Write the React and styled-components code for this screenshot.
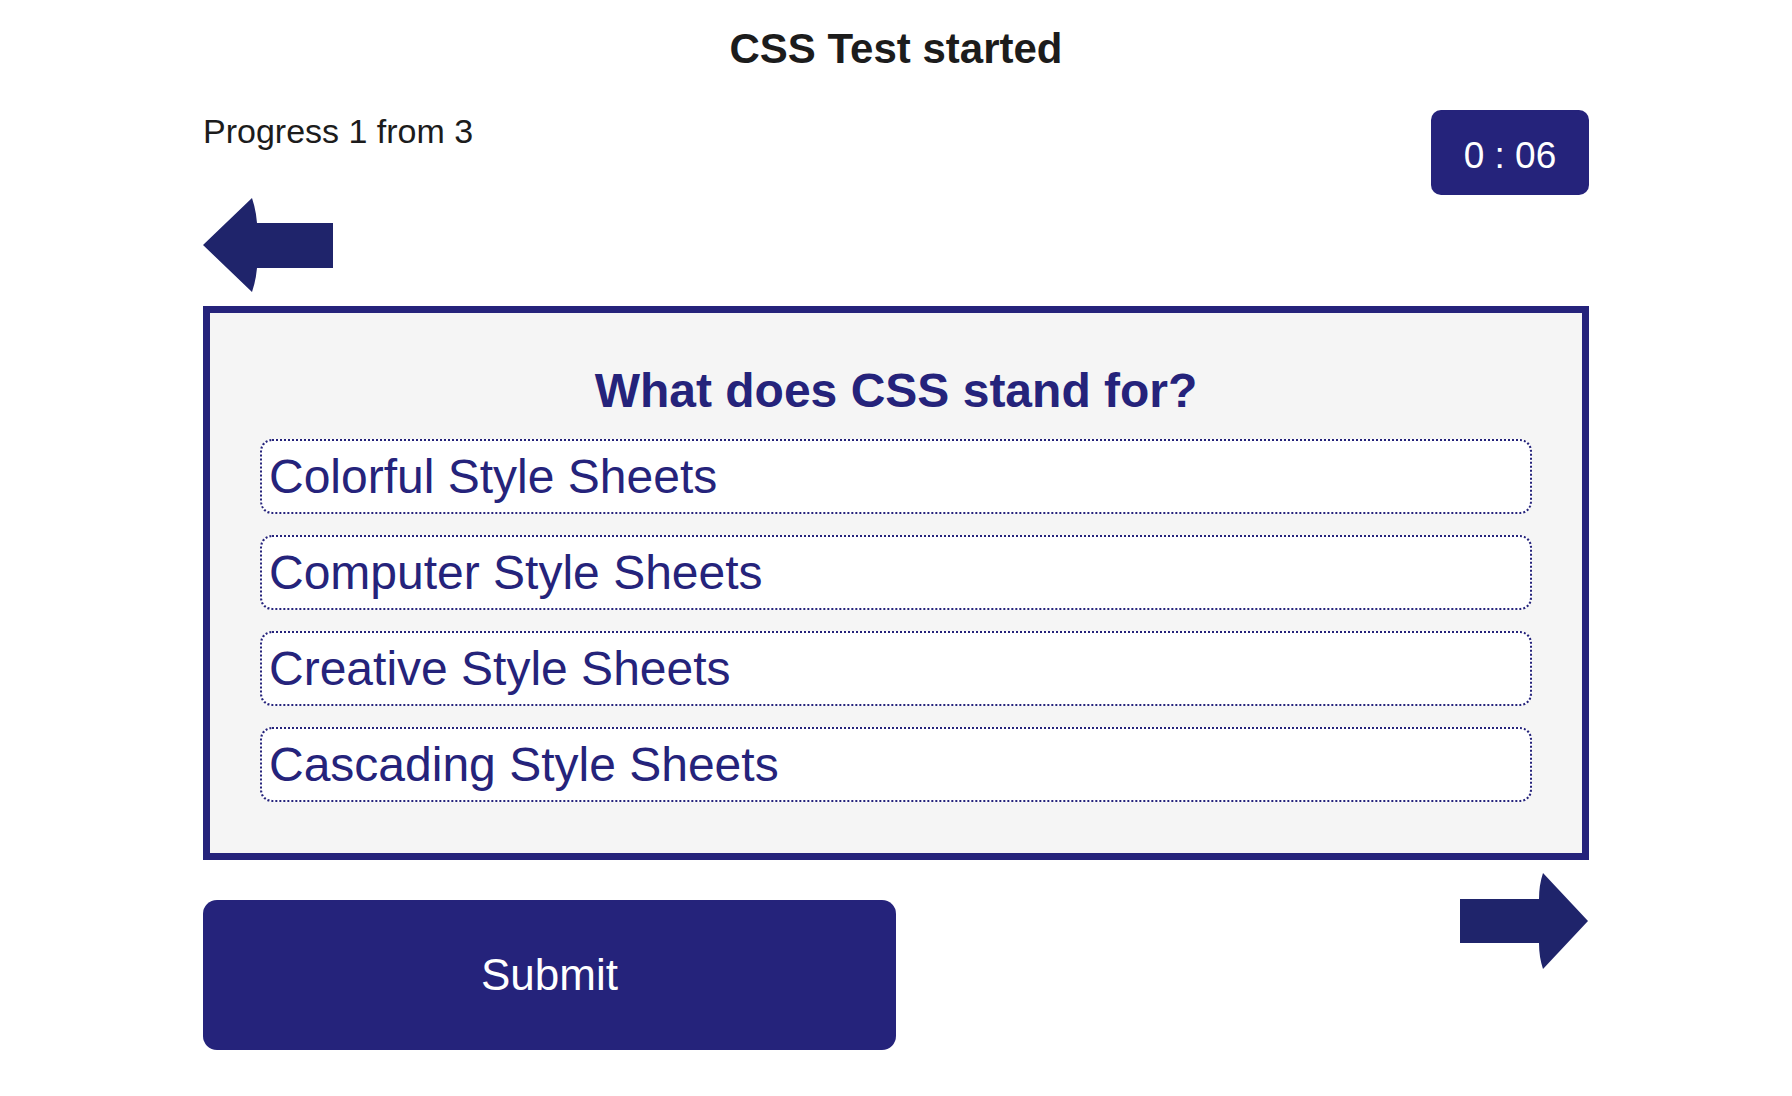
import React, { useState } from 'react';
import styled, { createGlobalStyle } from 'styled-components';

const navy = '#25237b';
const arrowNavy = '#1f246b';

const GlobalStyle = createGlobalStyle`
  html, body {
    margin: 0;
    padding: 0;
    background: #ffffff;
  }
  body {
    font-family: "Liberation Sans", Arial, Helvetica, sans-serif;
    color: #1c1c1c;
  }
`;

const Page = styled.div`
  width: 1386px;
  margin: 0 auto;
  padding-top: 25px;
`;

const Title = styled.h1`
  margin: 0;
  font-size: 42px;
  line-height: 48px;
  font-weight: 700;
  text-align: center;
  color: #1c1c1c;
`;

const StatusRow = styled.div`
  display: flex;
  justify-content: space-between;
  align-items: flex-start;
  margin-top: 37px;
`;

const Progress = styled.div`
  margin-top: 2px;
  font-size: 34px;
  line-height: 39px;
`;

const Timer = styled.div`
  box-sizing: border-box;
  width: 158px;
  height: 85px;
  padding-top: 25px;
  border-radius: 10px;
  background: ${navy};
  color: #ffffff;
  font-size: 37px;
  line-height: 42px;
  text-align: center;
`;

const ArrowButton = styled.button`
  display: block;
  padding: 0;
  border: 0;
  background: none;
  cursor: pointer;
  margin-top: ${(p) => p.$top}px;

  svg {
    display: block;
  }
`;

const QuestionCard = styled.div`
  margin-top: 14px;
  border: 7px solid ${navy};
  background: #f5f5f5;
  padding: 50px 50px 51px;
  display: flex;
  flex-direction: column;
  gap: 21px;
`;

const Question = styled.h2`
  margin: 0;
  font-size: 48px;
  line-height: 55px;
  font-weight: 700;
  text-align: center;
  color: ${navy};
`;

const Option = styled.div`
  border: 2px dotted ${navy};
  border-radius: 12px;
  background: ${(p) => (p.$selected ? '#e8e8f4' : '#ffffff')};
  padding: 8px 7px;
  font-size: 48px;
  line-height: 55px;
  color: ${navy};
  cursor: pointer;
`;

const FooterRow = styled.div`
  display: flex;
  justify-content: space-between;
  align-items: flex-start;
`;

const SubmitButton = styled.button`
  margin-top: 40px;
  width: 693px;
  height: 150px;
  border: 0;
  border-radius: 14px;
  background: ${navy};
  color: #ffffff;
  font-family: "Liberation Sans", Arial, Helvetica, sans-serif;
  font-size: 44px;
  cursor: pointer;
`;

const LeftArrow = () => (
  <svg width="130" height="94" viewBox="0 0 130 94">
    <path
      d="M0 47 L49 0 Q53 12 54 25 L130 25 L130 70 L54 70 Q53 82 49 94 Z"
      fill={arrowNavy}
    />
  </svg>
);

const RightArrow = () => (
  <svg width="130" height="96" viewBox="0 0 130 96">
    <path
      d="M129 48 L84 0 Q80 12 80 26 L1 26 L1 70 L80 70 Q80 84 84 96 Z"
      fill={arrowNavy}
    />
  </svg>
);

const options = [
  'Colorful Style Sheets',
  'Computer Style Sheets',
  'Creative Style Sheets',
  'Cascading Style Sheets',
];

export default function App() {
  const [selected, setSelected] = useState(null);

  return (
    <>
      <GlobalStyle />
      <Page>
        <Title>CSS Test started</Title>
        <StatusRow>
          <Progress>Progress 1 from 3</Progress>
          <Timer>0 : 06</Timer>
        </StatusRow>
        <ArrowButton $top={3} aria-label="Previous question">
          <LeftArrow />
        </ArrowButton>
        <QuestionCard>
          <Question>What does CSS stand for?</Question>
          {options.map((opt, i) => (
            <Option key={opt} $selected={selected === i} onClick={() => setSelected(i)}>
              {opt}
            </Option>
          ))}
        </QuestionCard>
        <FooterRow>
          <SubmitButton>Submit</SubmitButton>
          <ArrowButton $top={13} aria-label="Next question">
            <RightArrow />
          </ArrowButton>
        </FooterRow>
      </Page>
    </>
  );
}
